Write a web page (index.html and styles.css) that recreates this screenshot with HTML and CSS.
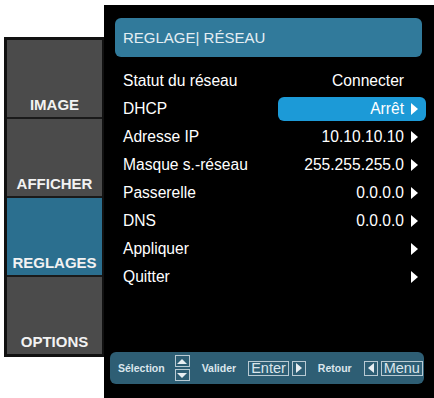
FILE: index.html
```html
<!DOCTYPE html>
<html>
<head>
  <link rel="stylesheet" href="styles.css">
</head>
<body>
  <div class="screen">
    <div class="menu-tabs">
      <div class="tab"><span>IMAGE</span></div>
      <div class="tab"><span>AFFICHER</span></div>
      <div class="tab active"><span>REGLAGES</span></div>
      <div class="tab"><span>OPTIONS</span></div>
    </div>

    <div class="panel">
      <div class="panel-title">REGLAGE| RÉSEAU</div>

      <ul class="settings">
        <li class="row">
          <span class="label">Statut du réseau</span>
          <span class="value">Connecter<i class="arrow hidden"></i></span>
        </li>
        <li class="row">
          <span class="label">DHCP</span>
          <span class="value selected">Arrêt<i class="arrow"></i></span>
        </li>
        <li class="row">
          <span class="label">Adresse IP</span>
          <span class="value">10.10.10.10<i class="arrow"></i></span>
        </li>
        <li class="row">
          <span class="label">Masque s.-réseau</span>
          <span class="value">255.255.255.0<i class="arrow"></i></span>
        </li>
        <li class="row">
          <span class="label">Passerelle</span>
          <span class="value">0.0.0.0<i class="arrow"></i></span>
        </li>
        <li class="row">
          <span class="label">DNS</span>
          <span class="value">0.0.0.0<i class="arrow"></i></span>
        </li>
        <li class="row">
          <span class="label">Appliquer</span>
          <span class="value"><i class="arrow"></i></span>
        </li>
        <li class="row">
          <span class="label">Quitter</span>
          <span class="value"><i class="arrow"></i></span>
        </li>
      </ul>

      <div class="help-bar">
        <span class="help-text">Sélection</span>
        <span class="updown">
          <span class="mini-key"><i class="tri up"></i></span>
          <span class="mini-key"><i class="tri down"></i></span>
        </span>
        <span class="help-text">Valider</span>
        <span class="key-pair">
          <span class="key">Enter</span>
          <span class="key icon"><i class="tri right"></i></span>
        </span>
        <span class="help-text">Retour</span>
        <span class="key-pair">
          <span class="key icon"><i class="tri left"></i></span>
          <span class="key">Menu</span>
        </span>
      </div>
    </div>
  </div>
</body>
</html>
```

FILE: styles.css
```css
:root {
  --panel-bg: #000;
  --title-blue: #317a9b;
  --select-blue: #1c9ad7;
  --tab-gray: #4b4b4b;
  --tab-blue: #2b6f8f;
  --bar-blue: #2e5e74;
  --key-line: #b9cad3;
  --text: #fff;
  --text-soft: #dbe6ec;
}

body {
  margin: 0;
  background: #fff;
  font-family: "Liberation Sans", Arial, sans-serif;
  color: var(--text);
}

.screen {
  display: flex;
  align-items: flex-start;
  padding-top: 5px;
  width: 434px;
  height: 393px;
}

.menu-tabs {
  flex-shrink: 0;
  margin: 32px 0 0 4px;
  width: 95px;
  border: 3px solid #111;
  border-right-width: 2px;
  background: #1a1a1a;
  display: flex;
  flex-direction: column;
  gap: 2px;
}

.tab {
  height: 77px;
  background: var(--tab-gray);
  display: flex;
  align-items: flex-end;
  justify-content: center;
  padding-bottom: 4px;
  box-sizing: border-box;
  font-size: 15px;
  font-weight: bold;
  color: #f2f2f2;
  white-space: nowrap;
}

.tab.active {
  background: var(--tab-blue);
}

.panel {
  flex: 1;
  min-width: 0;
  height: 393px;
  background: var(--panel-bg);
  padding: 13px 8px 0 11px;
  box-sizing: border-box;
  display: flex;
  flex-direction: column;
}

.panel-title {
  height: 39px;
  margin-right: 4px;
  background: var(--title-blue);
  border-radius: 6px;
  padding-left: 8px;
  display: flex;
  align-items: center;
  font-size: 15px;
  color: #e4eef3;
}

.settings {
  list-style: none;
  margin: 10px 0 0;
  padding: 0;
}

.row {
  height: 28px;
  display: flex;
  align-items: center;
  justify-content: space-between;
  padding-left: 8px;
  font-size: 15.6px;
}

.value {
  width: 148px;
  height: 24px;
  box-sizing: border-box;
  padding-right: 8px;
  display: flex;
  align-items: center;
  justify-content: flex-end;
  gap: 7px;
  border-radius: 6px;
}

.value.selected {
  background: var(--select-blue);
}

.arrow {
  width: 0;
  height: 0;
  border-left: 7px solid #fff;
  border-top: 6px solid transparent;
  border-bottom: 6px solid transparent;
}

.arrow.hidden {
  visibility: hidden;
}

.help-bar {
  margin: auto 2px 14px -5px;
  height: 32px;
  background: var(--bar-blue);
  border-radius: 6px;
  display: flex;
  align-items: center;
  padding-left: 8px;
  gap: 12px;
  white-space: nowrap;
}

.help-text {
  font-size: 10.5px;
  font-weight: bold;
  color: var(--text-soft);
}

.updown {
  display: flex;
  flex-direction: column;
  gap: 2px;
  margin-left: -2px;
}

.mini-key {
  width: 15px;
  height: 12px;
  box-sizing: border-box;
  border: 1px solid var(--key-line);
  display: flex;
  align-items: center;
  justify-content: center;
}

.key-pair {
  display: flex;
  gap: 3px;
}

.key {
  height: 15px;
  box-sizing: border-box;
  border: 1px solid var(--key-line);
  padding: 0 2px;
  font-size: 14.5px;
  line-height: 13px;
  color: var(--text-soft);
  display: flex;
  align-items: center;
}

.key.icon {
  width: 14px;
  padding: 0;
  justify-content: center;
}

.tri {
  width: 0;
  height: 0;
}

.tri.up {
  border-bottom: 5px solid #e8eef2;
  border-left: 5px solid transparent;
  border-right: 5px solid transparent;
}

.tri.down {
  border-top: 5px solid #e8eef2;
  border-left: 5px solid transparent;
  border-right: 5px solid transparent;
}

.tri.right {
  border-left: 6px solid #e8eef2;
  border-top: 5px solid transparent;
  border-bottom: 5px solid transparent;
}

.tri.left {
  border-right: 6px solid #e8eef2;
  border-top: 5px solid transparent;
  border-bottom: 5px solid transparent;
}
```
